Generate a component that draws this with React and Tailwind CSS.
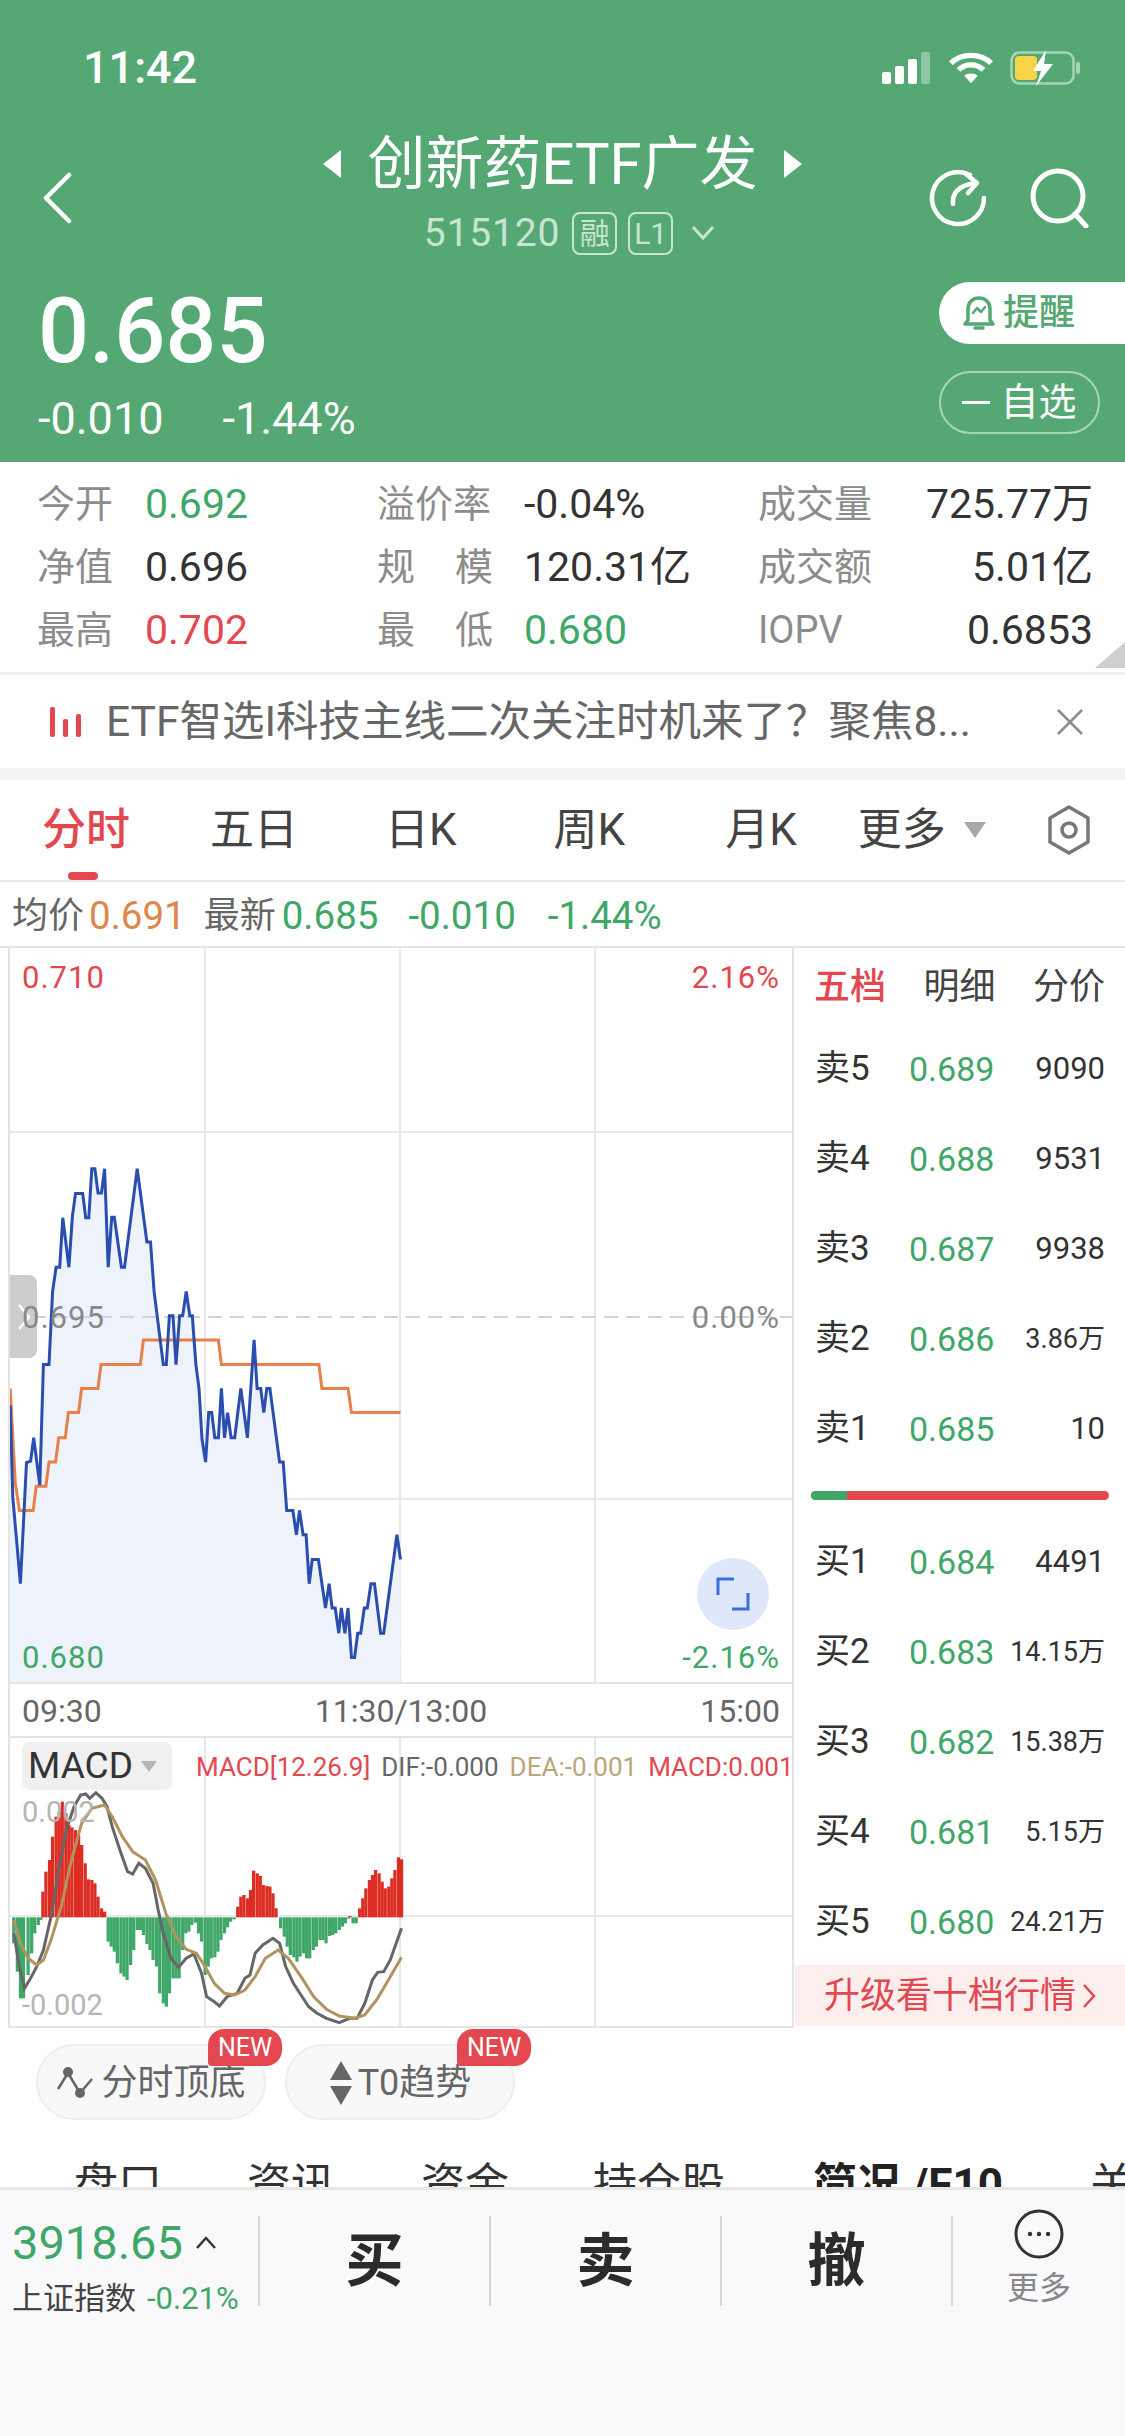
import React from "react";

const GREEN = "#3fa768";
const blue = [[20,960],[25,1150],[40,1328],[52,1078],[60,1075],[66,1027],[78,1125],[85,876],[96,876],[103,725],[110,675],[117,675],[123,573],[135,675],[142,570],[148,523],[162,523],[168,573],[174,573],[180,472],[186,472],[192,522],[199,522],[205,472],[212,675],[219,572],[224,572],[238,675],[244,675],[269,472],[288,623],[295,623],[302,725],[320,876],[326,876],[332,775],[339,775],[345,876],[352,775],[358,775],[365,725],[372,775],[377,775],[384,876],[390,925],[396,1030],[403,1077],[409,975],[415,975],[421,1027],[428,1027],[434,925],[440,1027],[446,975],[453,1027],[460,1027],[472,925],[485,1027],[498,825],[504,925],[511,925],[517,975],[523,925],[529,925],[548,1077],[555,1077],[562,1177],[574,1177],[581,1227],[587,1177],[594,1227],[600,1227],[606,1328],[612,1278],[624,1278],[638,1378],[645,1328],[651,1378],[657,1378],[664,1430],[669,1378],[676,1430],[682,1378],[689,1480],[695,1480],[701,1430],[707,1430],[714,1378],[720,1378],[727,1328],[734,1328],[746,1430],[752,1430],[778,1227],[785,1278]];
const orange = [[20,925],[30,1120],[38,1177],[65,1177],[71,1127],[90,1127],[96,1077],[109,1077],[115,1027],[128,1027],[134,975],[154,975],[160,925],[192,925],[198,876],[275,876],[281,825],[428,825],[434,876],[625,876],[631,925],[682,925],[689,975],[785,975]];
const cx = (x) => x / 1.96 - 10;
const cy = (y) => y / 2.063 + 940 - 948;
const chartPts = (a) => a.map(([x, y]) => `${cx(x).toFixed(1)},${cy(y).toFixed(1)}`).join(" ");
const my = (y) => y / 3 + 1720 - 1738;
const macdPts = (a) => a.map(([x, y]) => `${cx(x).toFixed(1)},${my(y).toFixed(1)}`).join(" ");

const bars = [[27,670],[34,755],[40,835],[46,835],[55,765],[62,700],[68,640],[75,615],[80,600],[84,515],[90,455],[97,420],[103,350],[110,290],[116,275],[122,245],[129,280],[135,315],[141,322],[148,330],[154,345],[160,375],[167,430],[173,478],[180,480],[186,490],[192,530],[199,565],[205,575],[212,665],[218,680],[224,695],[230,730],[237,760],[243,770],[249,780],[256,735],[262,690],[269,630],[275,630],[281,645],[288,672],[294,690],[300,720],[307,740],[313,820],[320,850],[326,860],[332,820],[339,775],[345,775],[351,775],[358,690],[364,640],[370,635],[376,615],[383,608],[389,640],[395,665],[402,765],[408,740],[414,715],[421,712],[427,695],[433,660],[440,640],[446,622],[452,605],[459,598],[466,560],[472,530],[478,525],[485,535],[491,510],[497,452],[504,460],[510,468],[516,495],[523,498],[529,500],[535,520],[541,565],[550,625],[557,650],[563,680],[569,705],[576,712],[582,725],[588,710],[595,700],[601,715],[607,715],[614,690],[620,680],[627,660],[633,660],[639,670],[646,648],[652,645],[658,640],[665,630],[671,620],[677,610],[683,596],[686,588],[692,610],[698,610],[705,565],[711,535],[717,505],[724,480],[730,465],[736,450],[743,460],[749,485],[755,505],[762,500],[768,475],[774,450],[781,412],[787,418]];
const dif = [[27,640],[38,740],[48,805],[60,775],[72,740],[85,690],[100,590],[115,450],[130,330],[145,260],[158,225],[168,222],[176,235],[188,218],[200,235],[210,260],[220,320],[235,390],[250,455],[260,462],[272,430],[285,445],[300,490],[310,570],[320,640],[335,715],[350,742],[365,715],[380,702],[395,760],[405,830],[420,845],[430,858],[445,830],[465,820],[480,775],[490,765],[500,700],[515,675],[535,655],[548,670],[560,740],[575,790],[590,825],[605,860],[620,878],[640,895],[665,908],[685,895],[700,895],[715,850],[730,780],[740,757],[752,755],[765,720],[787,625]];
const dea = [[27,600],[40,670],[55,715],[72,735],[85,720],[100,660],[120,560],[140,420],[160,310],[180,265],[205,255],[220,290],[240,350],[260,395],[285,420],[305,480],[325,580],[345,650],[365,688],[385,700],[400,735],[420,790],[440,820],[460,825],[480,810],[500,770],[520,715],[545,690],[565,715],[590,770],[615,830],[640,868],[665,888],[695,895],[715,885],[740,835],[765,770],[787,712]];

function Cell({ label, value, color, spaced, w, vw, right }) {
  return (
    <>
      <div className={`text-[38px] text-[#8c8c8c] flex justify-between ${w}`}>
        {spaced ? (<><span>{label[0]}</span><span>{label[1]}</span></>) : label}
      </div>
      <div className={`text-[41px] ${vw} ${right ? "text-right" : ""}`} style={{ color }}>{value}</div>
    </>
  );
}

function DataRow({ a, b, c }) {
  return (
    <div className="flex items-center h-[63px] whitespace-nowrap">
      <Cell w="w-[108px]" vw="w-[232px]" {...a} />
      <Cell w="w-[116px]" vw="w-[265px] pl-[31px]" spaced={b.spaced} label={b.label} value={b.value} color={b.color} />
      <Cell w="w-[130px]" vw="w-[205px]" right {...c} />
    </div>
  );
}

function Book({ side, n, price, qty, small }) {
  return (
    <div className="flex items-center h-[90px] pl-[20px] pr-[20px] whitespace-nowrap">
      <span className="text-[35px] text-[#333] w-[94px]">{side}{n}</span>
      <span className="text-[34px] w-[96px]" style={{ color: GREEN }}>{price}</span>
      <span className={`flex-1 text-right text-[#333] ${small ? "text-[27px]" : "text-[31px]"}`}>{qty}</span>
    </div>
  );
}

function Pill({ icon, text }) {
  return (
    <div className="relative flex items-center justify-center gap-[5px] w-[230px] h-[76px] pt-[2px] rounded-full bg-[#f8f8f8] border-2 border-[#eeeeee] text-[36px] text-[#666] whitespace-nowrap">
      {icon}
      <span>{text}</span>
      <span className="absolute left-[170px] top-[-17px] w-[74px] h-[37px] rounded-t-[16px] rounded-br-[16px] rounded-bl-[4px] bg-[#e34850] text-white text-[25px] leading-[37px] text-center">NEW</span>
    </div>
  );
}

export default function App() {
  return (
    <div className="relative w-[1125px] h-[2436px] overflow-hidden bg-white font-[Roboto,'Noto_Sans_CJK_SC',sans-serif]">
      {/* header */}
      <header className="h-[462px] bg-[#55a874] text-white">
        <div className="flex items-center justify-between h-[136px] pl-[83px] pr-[43px]">
          <span className="text-[45px] font-medium">11:42</span>
          <div className="flex items-center gap-[16px]">
            <svg width="50" height="34" viewBox="0 0 50 34">
              <rect x="0" y="21" width="9" height="12" rx="2" fill="#fff" />
              <rect x="13" y="15" width="9" height="18" rx="2" fill="#fff" />
              <rect x="26" y="8" width="9" height="25" rx="2" fill="#fff" />
              <rect x="39" y="1" width="9" height="32" rx="2" fill="#fff" fillOpacity="0.35" />
            </svg>
            <svg width="46" height="34" viewBox="0 0 48 34" fill="none" stroke="#fff" strokeWidth="5.5">
              <path d="M3 12 C14 1 34 1 45 12" />
              <path d="M11 19 C18 12 30 12 37 19" />
              <path d="M24 33 L17 25 C20 22 28 22 31 25 Z" fill="#fff" stroke="none" />
            </svg>
            <svg width="72" height="36" viewBox="0 0 72 36">
              <rect x="1.5" y="2.5" width="62" height="31" rx="8" fill="none" stroke="#fff" strokeOpacity="0.5" strokeWidth="2.5" />
              <rect x="5" y="6" width="22" height="24" rx="4" fill="#f5d547" />
              <rect x="66" y="12" width="4" height="12" rx="2" fill="#fff" fillOpacity="0.5" />
              <path d="M36 0 L23 21 L31 21 L26 36 L43 14 L34 14 Z" fill="#fff" />
            </svg>
          </div>
        </div>
        <div className="flex h-[146px]">
          <div className="w-[300px] pl-[42px] pt-[36px]">
            <svg width="30" height="52" viewBox="0 0 30 52" fill="none" stroke="#fff" strokeWidth="4.5" strokeLinecap="round" strokeLinejoin="round">
              <path d="M27 3 L4 26 L27 49" />
            </svg>
          </div>
          <div className="w-[525px] flex flex-col items-center">
            <div className="flex items-center h-[52px] mt-[2px] gap-[26px]">
              <svg width="18" height="28" viewBox="0 0 18 28"><path d="M18 0 V28 L0 14 Z" fill="#fff" /></svg>
              <span className="text-[58px] leading-[52px] whitespace-nowrap">创新药ETF广发</span>
              <svg width="18" height="28" viewBox="0 0 18 28"><path d="M0 0 V28 L18 14 Z" fill="#fff" /></svg>
            </div>
            <div className="flex items-center h-[44px] mt-[21px] ml-[14px] text-[#c8e4d3] whitespace-nowrap">
              <span className="text-[39px] tracking-[0.8px] mr-[12px]">515120</span>
              <span className="flex items-center justify-center w-[45px] h-[43px] border-2 border-[#c8e4d3] rounded-[8px] text-[30px]">融</span>
              <span className="flex items-center justify-center w-[45px] h-[43px] ml-[11px] border-2 border-[#c8e4d3] rounded-[8px] text-[30px]">L1</span>
              <svg className="ml-[18px]" width="24" height="16" viewBox="0 0 24 16" fill="none" stroke="#c8e4d3" strokeWidth="3"><path d="M2 2 L12 13 L22 2" /></svg>
            </div>
          </div>
          <div className="w-[300px] flex items-start justify-end gap-[42px] pr-[35px] pt-[32px]">
            <svg width="60" height="60" viewBox="0 0 60 60" fill="none" stroke="#fff" strokeWidth="4.5" strokeLinecap="round" strokeLinejoin="round">
              <path d="M42 7 A26 26 0 1 0 56 30" />
              <path d="M25 36 C24 26 30 18 46 15" />
              <path d="M38 6 L49 15 L40 25" />
            </svg>
            <svg width="60" height="60" viewBox="0 0 60 60" fill="none" stroke="#fff" strokeWidth="5" strokeLinecap="round">
              <circle cx="28" cy="28" r="25" />
              <path d="M45 46 L56 58" />
            </svg>
          </div>
        </div>
        <div className="flex justify-between h-[180px]">
          <div className="pl-[38px]">
            <div className="text-[90px] leading-[92px] mt-[4px] font-medium">0.685</div>
            <div className="flex text-[45px] leading-[44px] mt-[19px] gap-[59px] whitespace-nowrap">
              <span>-0.010</span><span>-1.44%</span>
            </div>
          </div>
          <div className="flex flex-col items-start w-[186px]">
            <div className="flex items-center w-[186px] h-[62px] pl-[24px] gap-[8px] bg-white rounded-l-[31px] text-[36px] font-medium text-[#55a874]">
              <svg width="32" height="36" viewBox="0 0 32 36" fill="none" stroke="#55a874" strokeWidth="3.5" strokeLinejoin="round" strokeLinecap="round">
                <path d="M5 25 V14 C5 7 10 3 16 3 C22 3 27 7 27 14 V25 L30 29 H2 Z" />
                <path d="M12 33 H20" />
                <path d="M10 18 L14 13 L18 17 L22 12" strokeWidth="2.5" />
              </svg>
              <span>提醒</span>
            </div>
            <div className="flex items-center justify-center w-[161px] h-[63px] mt-[27px] gap-[10px] rounded-full border-2 border-white/50 text-[38px]">
              <span className="w-[28px] h-[3px] bg-white" />
              <span>自选</span>
            </div>
          </div>
        </div>
      </header>

      {/* quote table */}
      <section className="relative h-[213px] pl-[37px] pt-[11px] border-b-[3px] border-[#f0f0f0]">
        <DataRow
          a={{ label: "今开", value: "0.692", color: GREEN }}
          b={{ label: "溢价率", value: "-0.04%", color: "#333" }}
          c={{ label: "成交量", value: "725.77万", color: "#333" }}
        />
        <DataRow
          a={{ label: "净值", value: "0.696", color: "#333" }}
          b={{ label: "规模", spaced: true, value: "120.31亿", color: "#333" }}
          c={{ label: "成交额", value: "5.01亿", color: "#333" }}
        />
        <DataRow
          a={{ label: "最高", value: "0.702", color: "#e34850" }}
          b={{ label: "最低", spaced: true, value: "0.680", color: GREEN }}
          c={{ label: "IOPV", value: "0.6853", color: "#333" }}
        />
        <svg className="absolute right-0 bottom-[4px]" width="30" height="26" viewBox="0 0 30 26"><path d="M30 0 V26 H0 Z" fill="#cfcfcf" /></svg>
      </section>

      {/* notice */}
      <div className="flex items-center h-[93px] pl-[50px] whitespace-nowrap">
        <svg width="32" height="30" viewBox="0 0 32 30" fill="#e34850">
          <rect x="0" y="0" width="5" height="30" rx="2" />
          <rect x="13" y="12" width="5" height="18" rx="2" />
          <rect x="26" y="7" width="5" height="23" rx="2" />
        </svg>
        <span className="ml-[24px] w-[950px] text-[42.5px] text-[#666]">ETF智选I科技主线二次关注时机来了？聚焦8...</span>
        <svg width="28" height="28" viewBox="0 0 28 28" fill="none" stroke="#8c8c8c" strokeWidth="2.5"><path d="M2 2 L26 26 M26 2 L2 26" /></svg>
      </div>
      <div className="h-[12px] bg-[#f2f3f5]" />

      {/* period tabs */}
      <nav className="relative h-[102px] flex items-center text-[44px] text-[#444] whitespace-nowrap border-b-2 border-[#e8e8e8]">
        <span className="ml-[42px] text-[#e34850] font-medium">分时</span>
        <span className="absolute left-[68px] bottom-[0px] w-[30px] h-[8px] rounded-[4px] bg-[#e34850]" />
        <span className="ml-[80px]">五日</span>
        <span className="ml-[87px]">日K</span>
        <span className="ml-[97px]">周K</span>
        <span className="ml-[100px]">月K</span>
        <span className="ml-[61px]">更多</span>
        <svg className="ml-[18px]" width="22" height="16" viewBox="0 0 22 16"><path d="M0 0 H22 L11 16 Z" fill="#a8a8a8" /></svg>
        <svg className="ml-[61px]" width="44" height="50" viewBox="0 0 44 50" fill="none" stroke="#777" strokeWidth="3.5">
          <path d="M22 2 L41 13 V37 L22 48 L3 37 V13 Z" strokeLinejoin="round" />
          <circle cx="22" cy="25" r="7" />
        </svg>
      </nav>

      {/* info line */}
      <div className="flex items-center h-[64px] pl-[12px] pt-[4px] text-[36px] whitespace-nowrap">
        <span className="text-[#666]">均价</span>
        <span className="text-[38.5px] text-[#e0864a] ml-[5px]">0.691</span>
        <span className="text-[#666] ml-[18px]">最新</span>
        <span className="text-[38.5px] ml-[6px]" style={{ color: GREEN }}>0.685</span>
        <span className="text-[38.5px] ml-[30px]" style={{ color: GREEN }}>-0.010</span>
        <span className="text-[38.5px] ml-[32px]" style={{ color: GREEN }}>-1.44%</span>
      </div>

      {/* chart + order book */}
      <div className="flex h-[1082px] border-t-2 border-[#e4e4e4]">
        <div className="w-[795px] pl-[8px]">
          <div className="relative h-[734px] w-[786px] border-x-2 border-[#e4e4e4]">
            <svg className="block" width="782" height="734" viewBox="0 0 782 734">
              <g stroke="#e6e8ec" strokeWidth="2">
                <line x1="195" y1="0" x2="195" y2="734" />
                <line x1="390" y1="0" x2="390" y2="734" />
                <line x1="585" y1="0" x2="585" y2="734" />
                <line x1="0" y1="184" x2="782" y2="184" />
                <line x1="0" y1="551" x2="782" y2="551" />
              </g>
              <polygon points={`0,734 ${chartPts(blue)} 390,734`} fill="#edf2fb" />
              <line x1="0" y1="369" x2="782" y2="369" stroke="#cfd3de" strokeWidth="2" strokeDasharray="14 8" />
              <polyline points={chartPts(orange)} fill="none" stroke="#e8804a" strokeWidth="3" />
              <polyline points={chartPts(blue)} fill="none" stroke="#2a4db0" strokeWidth="3" />
            </svg>
            <div className="absolute left-0 top-[327px] w-[27px] h-[83px] bg-[#cccccc] rounded-r-[8px] flex items-center justify-center">
              <svg width="14" height="28" viewBox="0 0 14 28" fill="none" stroke="#fff" strokeWidth="2.5"><path d="M2 2 L12 14 L2 26" /></svg>
            </div>
            <span className="absolute left-[12px] top-[10px] text-[31px] leading-[40px] tracking-[1px] text-[#e34850]">0.710</span>
            <span className="absolute right-[12px] top-[10px] text-[31px] leading-[40px] tracking-[1px] text-[#e34850]">2.16%</span>
            <span className="absolute left-[12px] top-[350px] text-[31px] leading-[40px] tracking-[1px] text-[#888]">0.695</span>
            <span className="absolute right-[12px] top-[350px] text-[31px] leading-[40px] tracking-[1px] text-[#888]">0.00%</span>
            <span className="absolute left-[12px] top-[690px] text-[31px] leading-[40px] tracking-[1px]" style={{ color: GREEN }}>0.680</span>
            <span className="absolute right-[12px] top-[690px] text-[31px] leading-[40px] tracking-[1px]" style={{ color: GREEN }}>-2.16%</span>
            <div className="absolute left-[687px] top-[610px] w-[72px] h-[72px] rounded-full bg-[#dfe8fa] flex items-center justify-center">
              <svg width="34" height="34" viewBox="0 0 34 34" fill="none" stroke="#3b6fe0" strokeWidth="3"><path d="M2 18 V2 H18 M32 16 V32 H16" /></svg>
            </div>
          </div>
          <div className="flex items-center justify-between h-[56px] w-[786px] px-[12px] pt-[2px] border-x-2 border-y-2 border-[#e4e4e4] text-[32px] text-[#666] whitespace-nowrap">
            <span>09:30</span>
            <span>11:30/13:00</span>
            <span>15:00</span>
          </div>
          <div className="relative h-[290px] w-[786px] border-x-2 border-b-2 border-[#e4e4e4]">
            <svg className="block" width="782" height="288" viewBox="0 0 782 288">
              <g stroke="#e6e8ec" strokeWidth="2">
                <line x1="195" y1="0" x2="195" y2="288" />
                <line x1="390" y1="0" x2="390" y2="288" />
                <line x1="585" y1="0" x2="585" y2="288" />
                <line x1="0" y1="178" x2="782" y2="178" />
              </g>
              {bars.map(([x, y], i) => {
                const up = y < 592;
                const top = up ? my(y) : my(592);
                const h = Math.abs(y - 592) / 3;
                return <rect key={i} x={cx(x) - 1.6} y={top} width="3.25" height={h} fill={up ? "#dd2c22" : "#3fa768"} />;
              })}
              <polyline points={macdPts(dif)} fill="none" stroke="#666666" strokeWidth="3" />
              <polyline points={macdPts(dea)} fill="none" stroke="#b0935f" strokeWidth="3" />
            </svg>
            <div className="absolute left-[12px] top-[4px] flex items-center gap-[8px] w-[150px] h-[48px] pl-[6px] bg-[#f0f0f0] rounded-[8px] text-[37px] text-[#333]">
              <span>MACD</span>
              <svg width="16" height="11" viewBox="0 0 16 11"><path d="M0 0 H16 L8 11 Z" fill="#b5b5b5" /></svg>
            </div>
            <div className="absolute left-[186px] top-[14px] flex gap-[11px] text-[26px] leading-[30px] whitespace-nowrap">
              <span className="text-[#e34850]">MACD[12.26.9]</span>
              <span className="text-[#666]">DIF:-0.000</span>
              <span className="text-[#b9a67c]">DEA:-0.001</span>
              <span className="text-[#e34850]">MACD:0.001</span>
            </div>
            <span className="absolute left-[12px] top-[56px] text-[29px] leading-[36px] text-[#b5b5b5]">0.002</span>
            <span className="absolute left-[12px] top-[249px] text-[29px] leading-[36px] text-[#b5b5b5]">-0.002</span>
          </div>
        </div>

        <aside className="flex-1 flex flex-col pt-[2px]">
          <div className="flex items-center justify-between h-[74px] pl-[19px] pr-[20px] text-[36px] text-[#444] whitespace-nowrap">
            <span className="text-[#e34850] font-medium">五档</span>
            <span>明细</span>
            <span>分价</span>
          </div>
          <Book side="卖" n="5" price="0.689" qty="9090" />
          <Book side="卖" n="4" price="0.688" qty="9531" />
          <Book side="卖" n="3" price="0.687" qty="9938" />
          <Book side="卖" n="2" price="0.686" qty="3.86万" small />
          <Book side="卖" n="1" price="0.685" qty="10" />
          <div className="mx-[16px] my-[17px] h-[9px] rounded-full bg-[#e34850] overflow-hidden">
            <div className="w-[36px] h-full bg-[#3fa768]" />
          </div>
          <Book side="买" n="1" price="0.684" qty="4491" />
          <Book side="买" n="2" price="0.683" qty="14.15万" small />
          <Book side="买" n="3" price="0.682" qty="15.38万" small />
          <Book side="买" n="4" price="0.681" qty="5.15万" small />
          <Book side="买" n="5" price="0.680" qty="24.21万" small />
          <div className="flex items-center justify-center h-[61px] mt-[-2px] gap-[6px] bg-[#fdeeee] text-[36px] text-[#e34850] whitespace-nowrap">
            <span>升级看十档行情</span>
            <svg width="14" height="26" viewBox="0 0 14 26" fill="none" stroke="#e34850" strokeWidth="2.5"><path d="M2 2 L12 13 L2 24" /></svg>
          </div>
        </aside>
      </div>

      {/* pills */}
      <div className="flex gap-[19px] pl-[36px] mt-[16px]">
        <Pill
          text="分时顶底"
          icon={
            <svg width="40" height="36" viewBox="0 0 40 36" fill="none" stroke="#666" strokeWidth="2.5">
              <path d="M2 24 L12 8 L24 28 L36 14" />
              <circle cx="12" cy="7" r="5" fill="#666" stroke="none" />
              <circle cx="24" cy="28" r="5" fill="#666" stroke="none" />
            </svg>
          }
        />
        <Pill
          text="T0趋势"
          icon={
            <svg width="24" height="44" viewBox="0 0 24 44" fill="#666">
              <path d="M12 0 L23 19 H1 Z" />
              <path d="M12 44 L1 25 H23 Z" />
            </svg>
          }
        />
      </div>

      {/* clipped lower tabs */}
      <div className="flex h-[67px] mt-[20px] pl-[74px] pt-[15px] text-[44px] leading-[60px] text-[#333] whitespace-pre overflow-hidden">
        <span>盘口</span>
        <span className="ml-[85px]">资讯</span>
        <span className="ml-[86px]">资金</span>
        <span className="ml-[84px]">持仓股</span>
        <span className="ml-[88px] font-bold text-[#222]">简况 /F10</span>
        <span className="ml-[87px]">关联</span>
      </div>

      {/* bottom bar */}
      <footer className="absolute left-0 right-0 top-[2187px] bottom-0 bg-[#f9f9fb] border-t-[3px] border-[#e6e6e6]">
        <div className="flex items-start h-[118px] pt-[26px]">
          <div className="w-[258px] pl-[12px] h-[92px] pt-[5px] whitespace-nowrap">
            <div className="flex items-center h-[44px]">
              <span className="text-[47px] leading-[44px]" style={{ color: GREEN }}>3918.65</span>
              <svg className="ml-[12px]" width="22" height="14" viewBox="0 0 22 14" fill="none" stroke="#333" strokeWidth="2.5"><path d="M2 12 L11 2 L20 12" /></svg>
            </div>
            <div className="flex items-center mt-[11px] text-[31px]">
              <span className="text-[#444]">上证指数</span>
              <span className="ml-[11px] text-[31px]" style={{ color: GREEN }}>-0.21%</span>
            </div>
          </div>
          {["买", "卖", "撤"].map((t) => (
            <div key={t} className="w-[231px] h-[90px] border-l-2 border-[#d6d6d6] flex items-center justify-center text-[58px] font-bold text-[#2b2b2b]">{t}</div>
          ))}
          <div className="flex-1 h-[90px] border-l-2 border-[#d6d6d6] relative">
            <div className="absolute left-[61px] top-[-7px] flex flex-col items-center w-[50px]">
              <svg width="50" height="50" viewBox="0 0 50 50" fill="none">
                <circle cx="25" cy="25" r="23" stroke="#333" strokeWidth="3" />
                <circle cx="16" cy="25" r="2.2" fill="#333" />
                <circle cx="25" cy="25" r="2.2" fill="#333" />
                <circle cx="34" cy="25" r="2.2" fill="#333" />
              </svg>
              <span className="mt-[10px] text-[32px] leading-[38px] text-[#888] whitespace-nowrap">更多</span>
            </div>
          </div>
        </div>
      </footer>
    </div>
  );
}
